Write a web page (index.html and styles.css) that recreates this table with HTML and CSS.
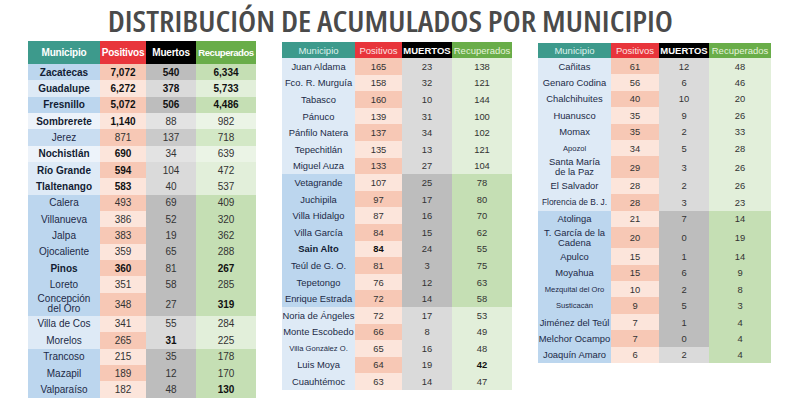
FILE: index.html
```html
<!DOCTYPE html>
<html lang="es">
<head>
<meta charset="utf-8">
<title>Distribución de acumulados por municipio</title>
<link rel="stylesheet" href="styles.css">
</head>
<body>
<h1 class="title"><span class="title-text">DISTRIBUCIÓN DE ACUMULADOS POR MUNICIPIO</span></h1>
<div class="tables">
  <table class="t t1">
    <thead>
      <tr><th class="h-mun">Municipio</th><th class="h-pos">Positivos</th><th class="h-mue">Muertos</th><th class="h-rec">Recuperados</th></tr>
    </thead>
    <tbody>
      <tr class="dk"><td class="mun b">Zacatecas</td><td class="pos b">7,072</td><td class="mue b">540</td><td class="rec b">6,334</td></tr>
      <tr class="lt"><td class="mun b">Guadalupe</td><td class="pos b">6,272</td><td class="mue b">378</td><td class="rec b">5,733</td></tr>
      <tr class="dk"><td class="mun b">Fresnillo</td><td class="pos b">5,072</td><td class="mue b">506</td><td class="rec b">4,486</td></tr>
      <tr class="lt wh"><td class="mun b">Sombrerete</td><td class="pos b">1,140</td><td class="mue">88</td><td class="rec">982</td></tr>
      <tr class="md"><td class="mun">Jerez</td><td class="pos">871</td><td class="mue">137</td><td class="rec">718</td></tr>
      <tr class="lt wh"><td class="mun b">Nochistlán</td><td class="pos b">690</td><td class="mue">34</td><td class="rec">639</td></tr>
      <tr class="lt"><td class="mun b">Río Grande</td><td class="pos b">594</td><td class="mue">104</td><td class="rec">472</td></tr>
      <tr class="lt"><td class="mun b">Tlaltenango</td><td class="pos b">583</td><td class="mue">40</td><td class="rec">537</td></tr>
      <tr class="dk"><td class="mun">Calera</td><td class="pos">493</td><td class="mue">69</td><td class="rec">409</td></tr>
      <tr class="dk"><td class="mun">Villanueva</td><td class="pos">386</td><td class="mue">52</td><td class="rec">320</td></tr>
      <tr class="dk"><td class="mun">Jalpa</td><td class="pos">383</td><td class="mue">19</td><td class="rec">362</td></tr>
      <tr class="dk"><td class="mun">Ojocaliente</td><td class="pos">359</td><td class="mue">65</td><td class="rec">288</td></tr>
      <tr class="dk"><td class="mun b">Pinos</td><td class="pos b">360</td><td class="mue">81</td><td class="rec b">267</td></tr>
      <tr class="dk"><td class="mun">Loreto</td><td class="pos">351</td><td class="mue">58</td><td class="rec">285</td></tr>
      <tr class="dk dbl"><td class="mun">Concepción<br>del Oro</td><td class="pos">348</td><td class="mue">27</td><td class="rec b">319</td></tr>
      <tr class="lt"><td class="mun">Villa de Cos</td><td class="pos">341</td><td class="mue">55</td><td class="rec">284</td></tr>
      <tr class="lt"><td class="mun">Morelos</td><td class="pos">265</td><td class="mue b">31</td><td class="rec">225</td></tr>
      <tr class="dk"><td class="mun">Trancoso</td><td class="pos">215</td><td class="mue">35</td><td class="rec">178</td></tr>
      <tr class="dk"><td class="mun">Mazapil</td><td class="pos">189</td><td class="mue">12</td><td class="rec">170</td></tr>
      <tr class="dk"><td class="mun">Valparaíso</td><td class="pos">182</td><td class="mue">48</td><td class="rec b">130</td></tr>
    </tbody>
  </table>

  <table class="t t2">
    <thead>
      <tr><th class="h-mun">Municipio</th><th class="h-pos">Positivos</th><th class="h-mue">MUERTOS</th><th class="h-rec">Recuperados</th></tr>
    </thead>
    <tbody>
      <tr class="lt"><td class="mun">Juan Aldama</td><td class="pos">165</td><td class="mue">23</td><td class="rec">138</td></tr>
      <tr class="lt"><td class="mun">Fco. R. Murguía</td><td class="pos">158</td><td class="mue">32</td><td class="rec">121</td></tr>
      <tr class="lt"><td class="mun">Tabasco</td><td class="pos">160</td><td class="mue">10</td><td class="rec">144</td></tr>
      <tr class="lt"><td class="mun">Pánuco</td><td class="pos">139</td><td class="mue">31</td><td class="rec">100</td></tr>
      <tr class="lt"><td class="mun">Pánfilo Natera</td><td class="pos">137</td><td class="mue">34</td><td class="rec">102</td></tr>
      <tr class="lt"><td class="mun">Tepechitlán</td><td class="pos">135</td><td class="mue">13</td><td class="rec">121</td></tr>
      <tr class="lt"><td class="mun">Miguel Auza</td><td class="pos">133</td><td class="mue">27</td><td class="rec">104</td></tr>
      <tr class="dk"><td class="mun">Vetagrande</td><td class="pos">107</td><td class="mue">25</td><td class="rec">78</td></tr>
      <tr class="dk"><td class="mun">Juchipila</td><td class="pos">97</td><td class="mue">17</td><td class="rec">80</td></tr>
      <tr class="dk"><td class="mun">Villa Hidalgo</td><td class="pos">87</td><td class="mue">16</td><td class="rec">70</td></tr>
      <tr class="dk"><td class="mun">Villa García</td><td class="pos">84</td><td class="mue">15</td><td class="rec">62</td></tr>
      <tr class="dk"><td class="mun b">Sain Alto</td><td class="pos b">84</td><td class="mue">24</td><td class="rec">55</td></tr>
      <tr class="dk"><td class="mun">Teúl de G. O.</td><td class="pos">81</td><td class="mue">3</td><td class="rec">75</td></tr>
      <tr class="dk"><td class="mun">Tepetongo</td><td class="pos">76</td><td class="mue">12</td><td class="rec">63</td></tr>
      <tr class="dk"><td class="mun">Enrique Estrada</td><td class="pos">72</td><td class="mue">14</td><td class="rec">58</td></tr>
      <tr class="lt"><td class="mun">Noria de Ángeles</td><td class="pos">72</td><td class="mue">17</td><td class="rec">53</td></tr>
      <tr class="lt"><td class="mun">Monte Escobedo</td><td class="pos">66</td><td class="mue">8</td><td class="rec">49</td></tr>
      <tr class="lt"><td class="mun sm">Villa González O.</td><td class="pos">65</td><td class="mue">16</td><td class="rec">48</td></tr>
      <tr class="lt"><td class="mun">Luis Moya</td><td class="pos">64</td><td class="mue">19</td><td class="rec b">42</td></tr>
      <tr class="lt"><td class="mun">Cuauhtémoc</td><td class="pos">63</td><td class="mue">14</td><td class="rec">47</td></tr>
    </tbody>
  </table>

  <table class="t t3">
    <thead>
      <tr><th class="h-mun">Municipio</th><th class="h-pos">Positivos</th><th class="h-mue">MUERTOS</th><th class="h-rec">Recuperados</th></tr>
    </thead>
    <tbody>
      <tr class="lt"><td class="mun">Cañitas</td><td class="pos">61</td><td class="mue">12</td><td class="rec">48</td></tr>
      <tr class="lt"><td class="mun">Genaro Codina</td><td class="pos">56</td><td class="mue">6</td><td class="rec">46</td></tr>
      <tr class="lt"><td class="mun">Chalchihuites</td><td class="pos">40</td><td class="mue">10</td><td class="rec">20</td></tr>
      <tr class="lt"><td class="mun">Huanusco</td><td class="pos">35</td><td class="mue">9</td><td class="rec">26</td></tr>
      <tr class="lt"><td class="mun">Momax</td><td class="pos">35</td><td class="mue">2</td><td class="rec">33</td></tr>
      <tr class="lt"><td class="mun sm">Apozol</td><td class="pos">34</td><td class="mue">5</td><td class="rec">28</td></tr>
      <tr class="lt dbl"><td class="mun">Santa María<br>de la Paz</td><td class="pos">29</td><td class="mue">3</td><td class="rec">26</td></tr>
      <tr class="lt"><td class="mun">El Salvador</td><td class="pos">28</td><td class="mue">2</td><td class="rec">26</td></tr>
      <tr class="lt"><td class="mun xs">Florencia de B. J.</td><td class="pos">28</td><td class="mue">3</td><td class="rec">23</td></tr>
      <tr class="dk"><td class="mun">Atolinga</td><td class="pos">21</td><td class="mue">7</td><td class="rec">14</td></tr>
      <tr class="dk dbl"><td class="mun">T. García de la<br>Cadena</td><td class="pos">20</td><td class="mue">0</td><td class="rec">19</td></tr>
      <tr class="dk"><td class="mun">Apulco</td><td class="pos">15</td><td class="mue">1</td><td class="rec">14</td></tr>
      <tr class="dk"><td class="mun">Moyahua</td><td class="pos">15</td><td class="mue">6</td><td class="rec">9</td></tr>
      <tr class="dk"><td class="mun sm">Mezquital del Oro</td><td class="pos">10</td><td class="mue">2</td><td class="rec">8</td></tr>
      <tr class="dk"><td class="mun sm">Susticacán</td><td class="pos">9</td><td class="mue">5</td><td class="rec">3</td></tr>
      <tr class="dk"><td class="mun">Jiménez del Teúl</td><td class="pos">7</td><td class="mue">1</td><td class="rec">4</td></tr>
      <tr class="dk"><td class="mun">Melchor Ocampo</td><td class="pos">7</td><td class="mue">0</td><td class="rec">4</td></tr>
      <tr class="dk mlt"><td class="mun">Joaquín Amaro</td><td class="pos">6</td><td class="mue">2</td><td class="rec">4</td></tr>
    </tbody>
  </table>
</div>
</body>
</html>
```

FILE: styles.css
```css
html, body {
  margin: 0;
  padding: 0;
}

body {
  width: 800px;
  height: 400px;
  overflow: hidden;
  background: #ffffff;
  font-family: "Liberation Sans", Arial, sans-serif;
  color: #2b2b2b;
}

.title {
  margin: 0;
  height: 41px;
  line-height: 42px;
  padding-right: 20px;
  text-align: center;
  font-family: "Open Sans", "DejaVu Sans", sans-serif;
  font-stretch: 75%;
  font-weight: 600;
  font-size: 28.5px;
  color: #4a4a4a;
}

.title-text {
  display: inline-block;
  transform: scaleX(1.12);
}

.tables {
  display: flex;
  align-items: flex-start;
  gap: 26px;
  padding-left: 28px;
}

.t {
  border-collapse: collapse;
  table-layout: fixed;
  border-spacing: 0;
}

.t th,
.t td {
  padding: 0;
  text-align: center;
  vertical-align: middle;
  white-space: nowrap;
}

.t th {
  color: #ffffff;
}

.h-mun { background: #3d9a8c; }
.h-pos { background: #e8353b; }
.h-mue { background: #000000; }
.h-rec { background: #69ad49; }

/* table 1 */
.t1 { margin-top: 0; }
.t1 .h-mun { width: 72px; }
.t1 .h-pos { width: 46px; }
.t1 .h-mue { width: 50px; }
.t1 .h-rec { width: 60px; }
.t1 th {
  height: 23px;
  font-size: 10px;
  font-weight: bold;
  letter-spacing: -0.2px;
}
.t1 .h-rec { letter-spacing: -0.5px; font-size: 9.6px; }
.t1 td {
  height: 16.35px;
  font-size: 10px;
}
.t1 .dbl td { height: 23px; }

/* table 2 */
.t2 { margin-top: 1px; }
.t2 .h-mun { width: 73px; }
.t2 .h-pos { width: 47px; }
.t2 .h-mue { width: 50px; }
.t2 .h-rec { width: 60px; }
.t2 td { height: 16.6px; }

/* table 3 */
.t3 { margin-top: 2px; }
.t3 .h-mun { width: 73px; }
.t3 .h-pos { width: 48px; }
.t3 .h-mue { width: 50px; }
.t3 .h-rec { width: 62px; }
.t3 td { height: 16.4px; }
.t3 .dbl td { height: 21.4px; }

.t2 th,
.t3 th {
  height: 16px;
  font-size: 9.5px;
  font-weight: normal;
}
.t2 .h-mun, .t3 .h-mun { color: #dff2ee; }
.t2 .h-pos, .t3 .h-pos { color: #fde3e3; }
.t2 .h-rec, .t3 .h-rec { color: #e6f4dc; }
.t2 .h-mue, .t3 .h-mue { font-weight: 600; }
.t3 th { height: 15px; }

.t2 td,
.t3 td {
  font-size: 9.4px;
}

.dbl .mun {
  line-height: 10px;
}

.mun { color: #1c2a47; }
.pos, .mue, .rec { color: #333333; }
.b { font-weight: bold; color: #111111; }
.mun.b { color: #121c33; }
.mun.sm { font-size: 7.6px; }
.mun.xs { font-size: 8.4px; }

/* row tones */
.dk .mun { background: #bcd6ee; }
.dk .mue { background: #bdbdbd; }
.dk .rec { background: #c5dfb4; }

.md .mun { background: #c9ddf1; }
.md .mue { background: #cacaca; }
.md .rec { background: #d3e8c6; }

.lt .mun { background: #deeaf6; }
.lt .mue { background: #dadada; }
.lt .rec { background: #e2efda; }

.wh .mun { background: #edf3fa; }
.wh .mue { background: #e3e3e3; }
.wh .rec { background: #ebf4e6; }

.mlt .mue { background: #dadada; }

tbody tr:nth-child(odd) .pos { background: #f7c8b5; }
tbody tr:nth-child(even) .pos { background: #fce5db; }
```
